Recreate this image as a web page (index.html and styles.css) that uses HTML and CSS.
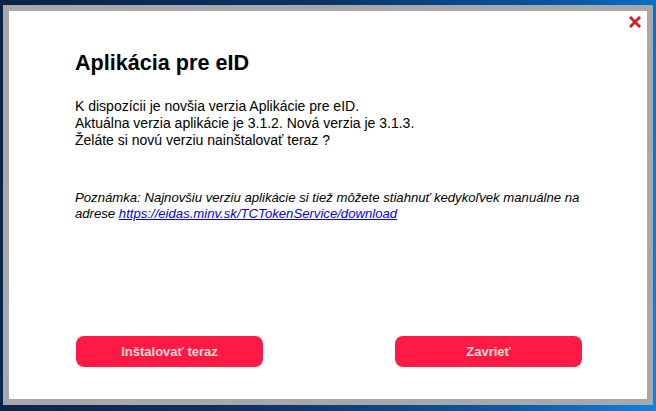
FILE: index.html
```
<!DOCTYPE html>
<html lang="sk">
<head>
<meta charset="utf-8">
<title>Aplikácia pre eID</title>
<link rel="stylesheet" href="styles.css">
</head>
<body>
<div class="desktop">
  <div class="window">
    <div class="content">
      <button class="close" aria-label="Zavrieť">
        <svg width="12" height="12" viewBox="0 0 12 12"><path d="M2 2 L10 10 M10 2 L2 10" stroke="#c9232b" stroke-width="3" stroke-linecap="square"/></svg>
      </button>
      <h1 class="title">Aplikácia pre eID</h1>
      <p class="message">K dispozícii je novšia verzia Aplikácie pre eID.<br>Aktuálna verzia aplikácie je 3.1.2. Nová verzia je 3.1.3.<br>Želáte si novú verziu nainštalovať teraz ?</p>
      <p class="note">Poznámka: Najnovšiu verziu aplikácie si tiež môžete stiahnuť kedykoľvek manuálne na adrese <a href="#">https://eidas.minv.sk/TCTokenService/download</a></p>
      <div class="actions">
        <button class="btn">Inštalovať teraz</button>
        <button class="btn">Zavrieť</button>
      </div>
    </div>
  </div>
</div>
</body>
</html>
```
FILE: styles.css
```
html, body {
  margin: 0;
  padding: 0;
}
body {
  width: 656px;
  height: 411px;
  overflow: hidden;
  font-family: "Liberation Sans", Arial, sans-serif;
}
.desktop {
  width: 656px;
  height: 411px;
  background: linear-gradient(100deg, #0a2246 0%, #0b3466 45%, #0a5aa8 80%, #0a84e6 100%);
  padding: 5px 0 0 3px;
  box-sizing: border-box;
}
.window {
  width: 650px;
  height: 400px;
  background: #a8a8ab;
  padding: 6px;
  box-sizing: border-box;
}
.content {
  position: relative;
  height: 100%;
  background: #ffffff;
  display: flex;
  flex-direction: column;
  padding: 39px 0 32px 66px;
  box-sizing: border-box;
}
.close {
  position: absolute;
  top: 5px;
  right: 6px;
  width: 12px;
  height: 12px;
  padding: 0;
  border: 0;
  background: none;
  display: flex;
}
.title {
  margin: 0;
  font-size: 21.6px;
  line-height: 25px;
  font-weight: bold;
  color: #000;
}
.message {
  margin: 23px 0 0;
  font-size: 14px;
  line-height: 17px;
  color: #000;
}
.note {
  margin: 41px 0 0;
  width: 525px;
  font-size: 13.15px;
  line-height: 16px;
  font-style: italic;
  color: #000;
}
.note a {
  color: #0000ee;
  text-decoration: underline;
}
.actions {
  margin-top: auto;
  display: flex;
  justify-content: space-between;
  padding: 0 65px 0 1px;
}
.btn {
  width: 187px;
  height: 31px;
  border: 0;
  border-radius: 8px;
  background: #fe1a45;
  color: #f2d8d2;
  font-family: "Liberation Sans", Arial, sans-serif;
  font-size: 13px;
  font-weight: bold;
  padding: 0;
}
```
